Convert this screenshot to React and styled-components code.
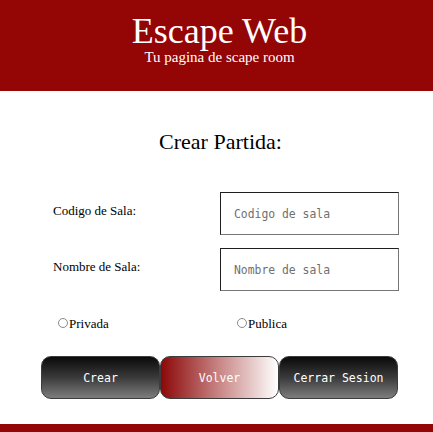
import React from "react";
import styled, { createGlobalStyle } from "styled-components";

const GlobalStyle = createGlobalStyle`
  html, body {
    margin: 0;
    padding: 0;
    background: #ffffff;
  }
  body {
    font-family: "Liberation Serif", "Times New Roman", serif;
    color: #000;
  }
  * { box-sizing: border-box; }
`;

const RED = "#940505";

const Page = styled.div`
  display: flex;
  flex-direction: column;
  width: 100%;
  height: 432px;
  overflow: hidden;
`;

const Header = styled.header`
  height: 91px;
  background: ${RED};
  color: #fff;
  display: flex;
  flex-direction: column;
  align-items: center;
  padding: 13px 0 0 6px;
`;

const Title = styled.h1`
  margin: 0;
  font-size: 36px;
  line-height: 36px;
  height: 37px;
  font-weight: normal;
`;

const Subtitle = styled.p`
  margin: 0;
  font-size: 15px;
  line-height: 15px;
`;

const Main = styled.main`
  flex: 1;
  display: flex;
  flex-direction: column;
`;

const SectionTitle = styled.h2`
  margin: 38px 0 0;
  padding-left: 8px;
  text-align: center;
  font-size: 22px;
  line-height: 26px;
  font-weight: normal;
`;

const Form = styled.form`
  display: flex;
  flex-direction: column;
  margin-top: 37px;
`;

const FieldRow = styled.div`
  display: grid;
  grid-template-columns: 167px 179px;
  align-items: start;
  padding-left: 53px;
  margin-bottom: ${(p) => p.$gap || 0}px;
`;

const Label = styled.label`
  font-size: 13px;
  line-height: 15px;
  padding-top: 11px;
`;

const Input = styled.input`
  width: 179px;
  height: 43px;
  margin: 0;
  padding: 0 13px;
  border: 1px solid #767676;
  border-top-color: #1f1f1f;
  border-left-color: #1f1f1f;
  background: #fff;
  font-family: "DejaVu Sans Mono", "Liberation Mono", monospace;
  font-size: 11.4px;
  outline: none;
  &::placeholder {
    color: #707070;
  }
`;

const RadioRow = styled.div`
  display: grid;
  grid-template-columns: 179px 179px;
  padding-left: 58px;
  margin-top: 25px;
`;

const RadioOption = styled.label`
  display: flex;
  align-items: center;
  font-size: 13px;
  line-height: 15px;
`;

const Radio = styled.input.attrs({ type: "radio" })`
  appearance: none;
  -webkit-appearance: none;
  width: 10px;
  height: 10px;
  margin: -2px 1px 0 0;
  border: 1px solid #8a8a8a;
  border-radius: 50%;
  background: #fff;
`;

const ButtonRow = styled.div`
  display: flex;
  padding-left: 41px;
  margin-top: 25px;
`;

const Button = styled.button`
  width: 119px;
  height: 43px;
  margin: 0;
  border: 1px solid #3c3c3c;
  border-radius: 10px;
  color: #fff;
  font-family: "DejaVu Sans Mono", "Liberation Mono", monospace;
  font-size: 11.5px;
  cursor: pointer;
  background: ${(p) =>
    p.$variant === "red"
      ? "linear-gradient(to right, #8c0808 0%, #c98686 50%, #ffffff 100%)"
      : "linear-gradient(to bottom, #0a0a0a 0%, #3a3a3a 50%, #7d7d7d 100%)"};
`;

const Footer = styled.footer`
  height: 8px;
  background: ${RED};
`;

export default function App() {
  return (
    <>
      <GlobalStyle />
      <Page>
        <Header>
          <Title>Escape Web</Title>
          <Subtitle>Tu pagina de scape room</Subtitle>
        </Header>
        <Main>
          <SectionTitle>Crear Partida:</SectionTitle>
          <Form onSubmit={(e) => e.preventDefault()}>
            <FieldRow $gap={13}>
              <Label htmlFor="codigo">Codigo de Sala:</Label>
              <Input id="codigo" placeholder="Codigo de sala" />
            </FieldRow>
            <FieldRow>
              <Label htmlFor="nombre">Nombre de Sala:</Label>
              <Input id="nombre" placeholder="Nombre de sala" />
            </FieldRow>
            <RadioRow>
              <RadioOption>
                <Radio name="tipo" value="privada" />
                Privada
              </RadioOption>
              <RadioOption>
                <Radio name="tipo" value="publica" />
                Publica
              </RadioOption>
            </RadioRow>
            <ButtonRow>
              <Button type="button">Crear</Button>
              <Button type="button" $variant="red">Volver</Button>
              <Button type="button">Cerrar Sesion</Button>
            </ButtonRow>
          </Form>
        </Main>
        <Footer />
      </Page>
    </>
  );
}
